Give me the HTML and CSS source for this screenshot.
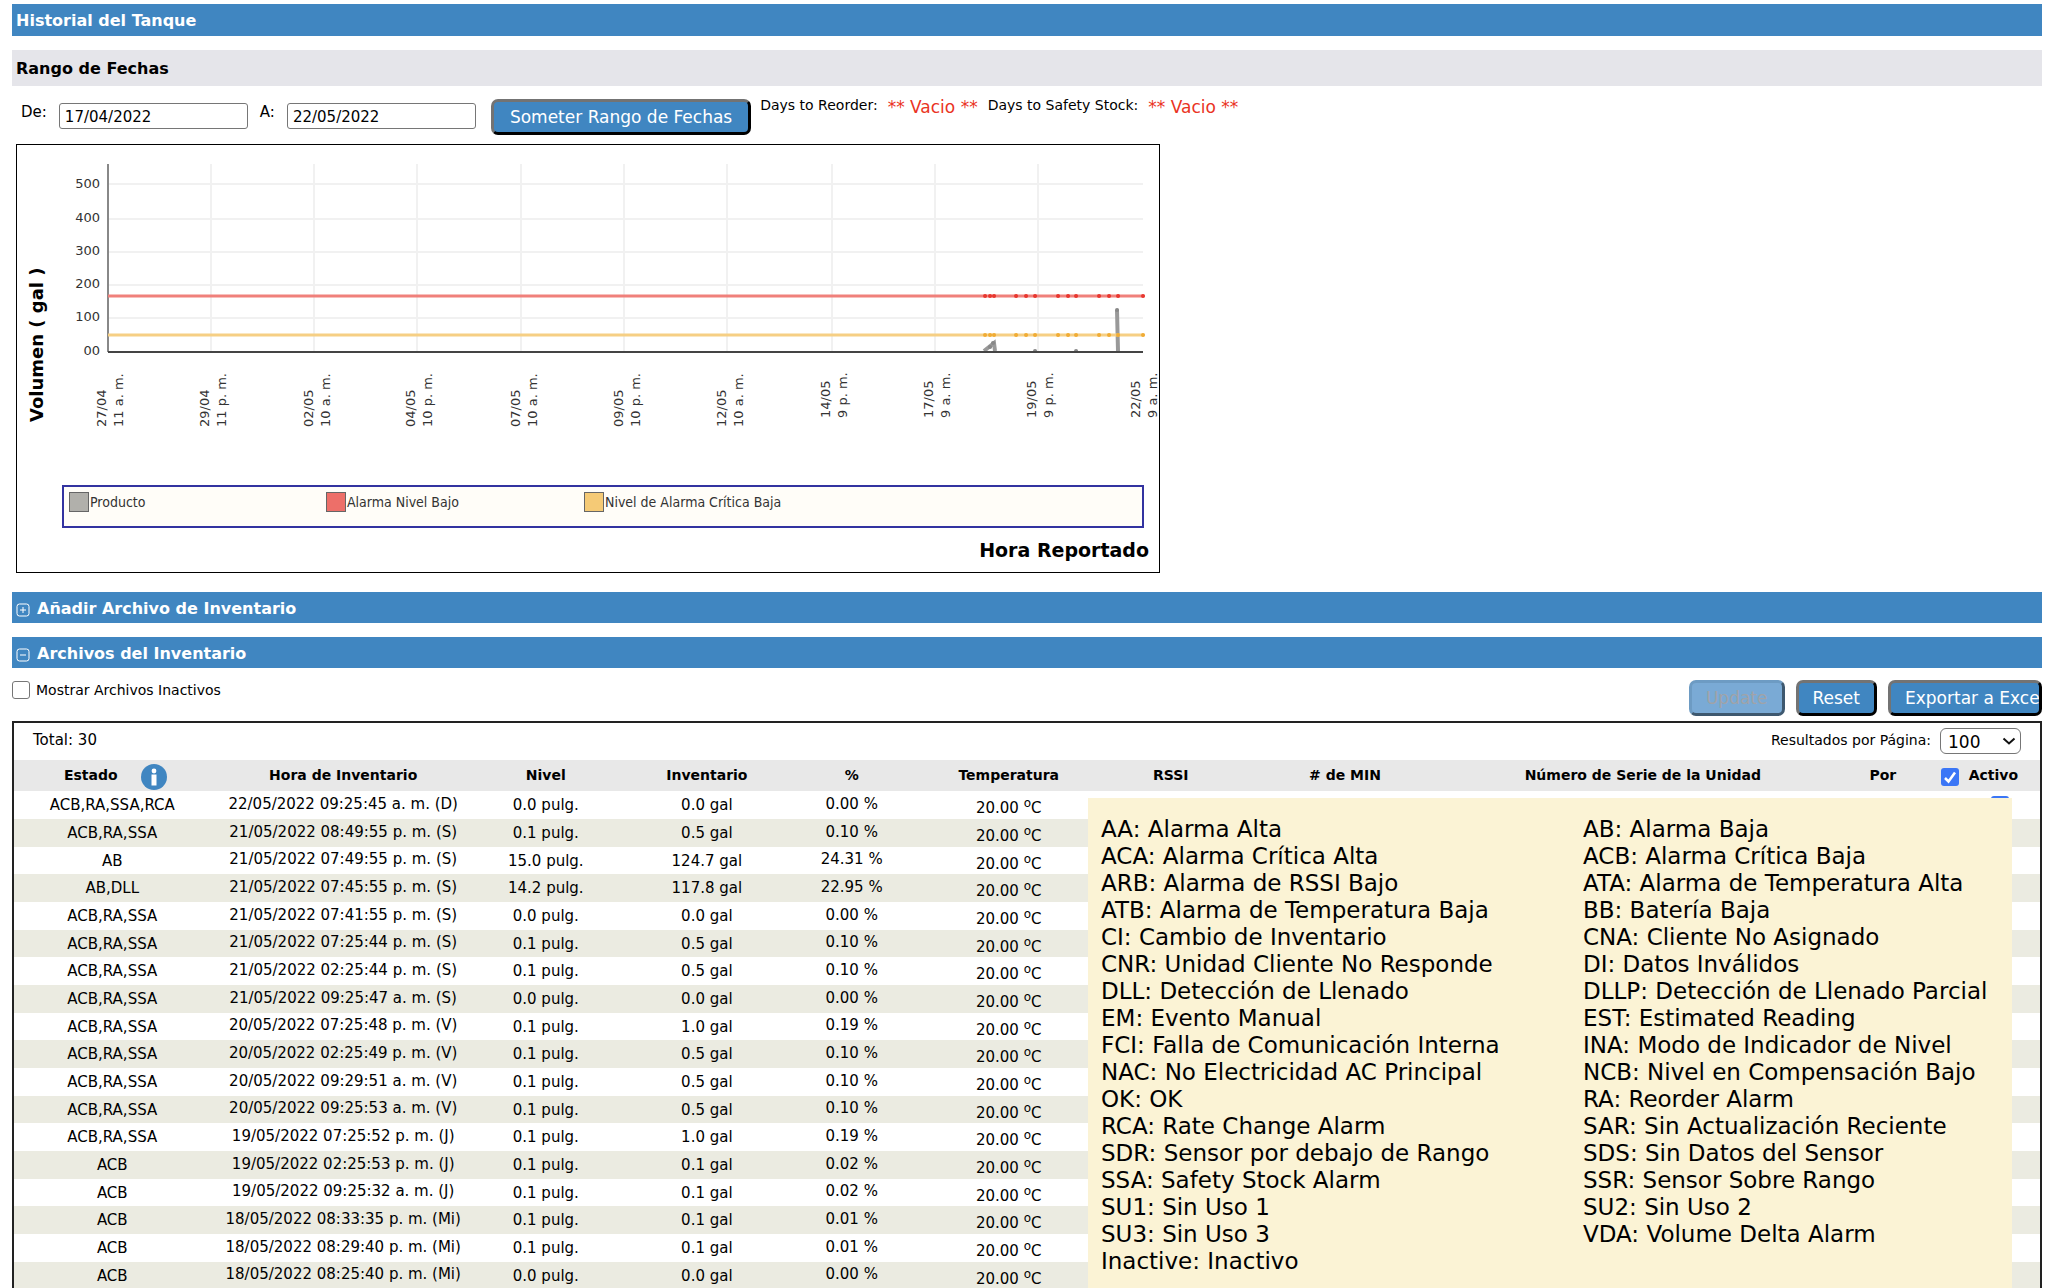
FILE: index.html
```html
<!DOCTYPE html>
<html lang="es">
<head>
<meta charset="utf-8">
<title>Historial del Tanque</title>
<link rel="stylesheet" href="styles.css">
</head>
<body>
<main class="page">
  <h1 class="bar">Historial del Tanque</h1>
  <h2 class="subbar">Rango de Fechas</h2>

  <form class="range">
    <label class="range-label" for="from">De:</label>
    <input class="date" id="from" type="text" value="17/04/2022">
    <label class="range-label" for="to">A:</label>
    <input class="date" id="to" type="text" value="22/05/2022">
    <button class="btn btn-submit" type="button">Someter Rango de Fechas</button>
    <p class="days"><span>Days to Reorder:</span><span class="empty">** Vacio **</span><span>Days to Safety Stock:</span><span class="empty">** Vacio **</span></p>
  </form>

  <figure class="chart">
    <svg class="chart-svg" viewBox="16 144 1144 429" role="img" aria-label="Volumen por hora reportado">
      <g class="grid">
        <path d="M109 184H1143M109 219H1143M109 252H1143M109 285H1143M109 318H1143"/>
        <path d="M211 164V351M314 164V351M417 164V351M521 164V351M624 164V351M727 164V351M832 164V351M935 164V351M1038 164V351"/>
      </g>
      <path class="axis-y" d="M108 164V352"/>
      <path class="product" d="M984 351L994 343L995 351M1117 310L1118 351"/>
      <path class="product-dots" d="M990 347h.1M993 343h.1M1035 351h.1M1076 351h.1M1117 310h.1"/>
      <path class="axis-x" d="M108 352H1143"/>
      <path class="low" d="M108 296H1143"/>
      <path class="critical" d="M108 335H1143"/>
      <path class="low-dots" d="M985 296h.1M990 296h.1M994 296h.1M1016 296h.1M1026 296h.1M1035 296h.1M1058 296h.1M1068 296h.1M1076 296h.1M1099 296h.1M1109 296h.1M1118 296h.1M1143 296h.1"/>
      <path class="critical-dots" d="M985 335h.1M990 335h.1M994 335h.1M1016 335h.1M1026 335h.1M1035 335h.1M1058 335h.1M1068 335h.1M1076 335h.1M1099 335h.1M1109 335h.1M1118 335h.1M1143 335h.1"/>
      <g class="tick" text-anchor="end">
        <text x="100" y="188">500</text><text x="100" y="222">400</text><text x="100" y="255">300</text><text x="100" y="288">200</text><text x="100" y="321">100</text><text x="100" y="355">00</text>
      </g>
      <g class="tick">
        <g transform="translate(106 427) rotate(-90)"><text>27/04</text><text y="17">11 a. m.</text></g>
        <g transform="translate(209 427) rotate(-90)"><text>29/04</text><text y="17">11 p. m.</text></g>
        <g transform="translate(313 427) rotate(-90)"><text>02/05</text><text y="17">10 a. m.</text></g>
        <g transform="translate(415 427) rotate(-90)"><text>04/05</text><text y="17">10 p. m.</text></g>
        <g transform="translate(520 427) rotate(-90)"><text>07/05</text><text y="17">10 a. m.</text></g>
        <g transform="translate(623 427) rotate(-90)"><text>09/05</text><text y="17">10 p. m.</text></g>
        <g transform="translate(726 427) rotate(-90)"><text>12/05</text><text y="17">10 a. m.</text></g>
        <g transform="translate(830 418) rotate(-90)"><text>14/05</text><text y="17">9 p. m.</text></g>
        <g transform="translate(933 418) rotate(-90)"><text>17/05</text><text y="17">9 a. m.</text></g>
        <g transform="translate(1036 418) rotate(-90)"><text>19/05</text><text y="17">9 p. m.</text></g>
        <g transform="translate(1140 418) rotate(-90)"><text>22/05</text><text y="17">9 a. m.</text></g>
      </g>
      <text class="axis-title" transform="translate(43 422) rotate(-90)">Volumen ( gal )</text>
      <rect class="legend-box" x="63" y="486" width="1080" height="41"/>
      <g class="swatch">
        <rect fill="#b1b0ab" x="69.500" y="492.500" width="19" height="19"/>
        <rect fill="#ed6f69" x="326.500" y="492.500" width="19" height="19"/>
        <rect fill="#f5ca76" x="584.500" y="492.500" width="19" height="19"/>
      </g>
      <g class="legend-text">
        <text x="90" y="507">Producto</text>
        <text x="347" y="507">Alarma Nivel Bajo</text>
        <text x="605" y="507">Nivel de Alarma Crítica Baja</text>
      </g>
      <text class="axis-title axis-title-x" x="1149" y="557" text-anchor="end">Hora Reportado</text>
    </svg>
  </figure>

  <h2 class="bar bar-toggle"><svg class="toggle" viewBox="0 0 14 14" aria-hidden="true"><rect x="1" y="1" width="12" height="12" rx="2.500"/><path d="M4 7H10M7 4V10"/></svg>Añadir Archivo de Inventario</h2>
  <h2 class="bar bar-toggle"><svg class="toggle" viewBox="0 0 14 14" aria-hidden="true"><rect x="1" y="1" width="12" height="12" rx="2.500"/><path d="M4 7H10"/></svg>Archivos del Inventario</h2>

  <div class="toolbar">
    <label class="inactive"><input class="check" type="checkbox">Mostrar Archivos Inactivos</label>
    <div class="actions">
      <button class="btn" type="button" disabled>Update</button>
      <button class="btn" type="button">Reset</button>
      <button class="btn btn-export" type="button">Exportar a Excel</button>
    </div>
  </div>

  <section class="records">
    <div class="summary">
      <span class="total">Total: 30</span>
      <div class="pager">
        <label for="size">Resultados por Página:</label>
        <span class="select-wrap"><select class="size" id="size"><option>100</option></select><svg class="chevron" viewBox="0 0 14 8" aria-hidden="true"><path d="M1.500 1.500L7 6.500L12.500 1.500"/></svg></span>
      </div>
    </div>
    <table class="table">
      <colgroup><col class="c-state"><col class="c-time"><col class="c-level"><col class="c-inv"><col class="c-pct"><col class="c-temp"><col class="c-rssi"><col class="c-min"><col class="c-serial"><col class="c-by"><col></colgroup>
      <thead>
        <tr><th><span class="state-head">Estado<svg class="info" viewBox="0 0 26 26" aria-hidden="true"><circle cx="13" cy="13" r="13" fill="#4086c1"/><circle cx="13" cy="7" r="2.400" fill="#fff"/><path d="M10.500 10.500h5v11h-5z" fill="#fff"/></svg></span></th><th>Hora de Inventario</th><th>Nivel</th><th>Inventario</th><th>%</th><th>Temperatura</th><th>RSSI</th><th># de MIN</th><th>Número de Serie de la Unidad</th><th>Por</th><th><label class="active-head"><input class="check" type="checkbox" checked>Activo</label></th></tr>
      </thead>
      <tbody id="rows"></tbody>
    </table>
    <aside class="legend" role="tooltip">
      <ul class="codes"><li>AA: Alarma Alta</li><li>AB: Alarma Baja</li><li>ACA: Alarma Crítica Alta</li><li>ACB: Alarma Crítica Baja</li><li>ARB: Alarma de RSSI Bajo</li><li>ATA: Alarma de Temperatura Alta</li><li>ATB: Alarma de Temperatura Baja</li><li>BB: Batería Baja</li><li>CI: Cambio de Inventario</li><li>CNA: Cliente No Asignado</li><li>CNR: Unidad Cliente No Responde</li><li>DI: Datos Inválidos</li><li>DLL: Detección de Llenado</li><li>DLLP: Detección de Llenado Parcial</li><li>EM: Evento Manual</li><li>EST: Estimated Reading</li><li>FCI: Falla de Comunicación Interna</li><li>INA: Modo de Indicador de Nivel</li><li>NAC: No Electricidad AC Principal</li><li>NCB: Nivel en Compensación Bajo</li><li>OK: OK</li><li>RA: Reorder Alarm</li><li>RCA: Rate Change Alarm</li><li>SAR: Sin Actualización Reciente</li><li>SDR: Sensor por debajo de Rango</li><li>SDS: Sin Datos del Sensor</li><li>SSA: Safety Stock Alarm</li><li>SSR: Sensor Sobre Rango</li><li>SU1: Sin Uso 1</li><li>SU2: Sin Uso 2</li><li>SU3: Sin Uso 3</li><li>VDA: Volume Delta Alarm</li><li>Inactive: Inactivo</li></ul>
    </aside>
  </section>
</main>
<script src="rows.js"></script>
</body>
</html>
```
FILE: styles.css
```css
* { box-sizing: border-box; }

body {
  margin: 0;
  background: #fff;
  color: #000;
  font: 15px/18px "DejaVu Sans", Verdana, sans-serif;
}

.page {
  height: 100vh;
  overflow: hidden;
  padding: 4px 6px 0 12px;
}

.bar, .subbar {
  margin: 0 0 14px;
  padding: 1px 4px 0;
  font-size: 16px;
  font-weight: bold;
}

.bar {
  height: 32px;
  line-height: 31px;
  background: #4086c1;
  color: #fff;
}

.subbar {
  height: 36px;
  margin-bottom: 13px;
  line-height: 35px;
  background: #e5e5ea;
}

.bar-toggle {
  display: flex;
  align-items: center;
  gap: 7px;
  height: 31px;
}

.toggle {
  width: 14px;
  height: 14px;
  margin-top: 3px;
  fill: none;
  stroke: #fff;
}

.range {
  display: flex;
  align-items: flex-start;
  height: 45px;
  padding-left: 9px;
}

.range-label { padding-top: 4px; }

.date {
  width: 189px;
  height: 26px;
  margin: 4px 12px 0;
  padding: 3px 5px 1px;
  border: 1px solid #767676;
  border-radius: 3px;
  background: #fff;
  color: #000;
  font: inherit;
}

.btn {
  height: 36px;
  padding: 0 14px;
  border: 3px outset #4a4a4a;
  border-color: #737373 #1c1c1c #1c1c1c #737373;
  border-radius: 7px;
  background: #4086c1;
  color: #fff;
  font: 17px/28px "DejaVu Sans", Verdana, sans-serif;
  white-space: nowrap;
}

.btn-submit {
  margin-left: 3px;
  padding: 0 16px;
}

.btn:disabled {
  border-color: #6d9bc3;
  background: #7aaad5;
  color: #a0a3a8;
}

.days {
  display: flex;
  gap: 10px;
  margin: -3px 0 0 9px;
  font-size: 14px;
}

.empty {
  padding-top: 2px;
  color: #ea3323;
  font-size: 17px;
}

.chart {
  max-width: 1144px;
  margin: 0 0 19px 4px;
  outline: 1px solid #000;
  outline-offset: -1px;
}

.chart-svg { display: block; width: 100%; }

.grid { fill: none; stroke: #f1f1f1; stroke-width: 2; }
.axis-y { stroke: #888; stroke-width: 2; }
.axis-x { stroke: #444; stroke-width: 2; }
.low { stroke: #f0807b; stroke-width: 3; }
.critical { stroke: #f6cf84; stroke-width: 3; }
.product { fill: none; stroke: #999; stroke-width: 4; }
.product-dots, .low-dots, .critical-dots { stroke-width: 4; stroke-linecap: round; }
.product-dots { stroke: #888; }
.low-dots { stroke: #e8372f; }
.critical-dots { stroke: #f0ac35; }
.tick { font-size: 13px; fill: #333; }
.axis-title { font-size: 18px; font-weight: bold; }
.axis-title-x { font-size: 19px; }
.legend-box { fill: #fffdf8; stroke: #3333a0; stroke-width: 2; }
.swatch { stroke: #666; }
.legend-text { font: 14px "DejaVu Sans Condensed", "DejaVu Sans", sans-serif; fill: #333; }

.toolbar {
  display: flex;
  justify-content: space-between;
  align-items: flex-start;
  height: 41px;
  margin-top: -2px;
}

.inactive {
  display: flex;
  align-items: center;
  gap: 6px;
  font-size: 14px;
}

.check {
  appearance: none;
  width: 18px;
  height: 18px;
  margin: 0;
  border: 1px solid #767676;
  border-radius: 3px;
  background: #fff;
}

.check:checked {
  border: 0;
  background: #3b76f6 url("data:image/svg+xml,%3Csvg xmlns='http://www.w3.org/2000/svg' viewBox='0 0 18 18'%3E%3Cpath d='M4 10L7.500 13.500L14 4.500' fill='none' stroke='white' stroke-width='2.500'/%3E%3C/svg%3E");
}

.inactive .check { margin-top: 1px; }

.actions { display: flex; gap: 11px; }

.btn-export {
  width: 154px;
  padding-right: 0;
  overflow: hidden;
  text-align: left;
}

.records {
  position: relative;
  min-height: 600px;
  border: 2px solid #222;
}

.summary {
  display: flex;
  justify-content: space-between;
  height: 37px;
  padding: 8px 19px 0;
}

.pager {
  display: flex;
  gap: 9px;
  font-size: 14px;
}

.select-wrap { position: relative; margin-top: -3px; }

.size {
  appearance: none;
  display: block;
  width: 81px;
  height: 26px;
  padding: 2px 7px 0;
  border: 1px solid #767676;
  border-radius: 6px;
  background: #fff;
  color: #000;
  font: 17px "DejaVu Sans", Verdana, sans-serif;
}

.chevron {
  position: absolute;
  top: 9px;
  right: 5px;
  width: 14px;
  height: 8px;
  fill: none;
  stroke: #111;
  stroke-width: 2;
}

.table {
  width: 100%;
  border-collapse: collapse;
  table-layout: fixed;
  text-align: center;
  white-space: nowrap;
}

.c-state { width: 9.7%; }
.c-time { width: 13.1%; }
.c-level { width: 6.9%; }
.c-inv { width: 9%; }
.c-pct { width: 5.3%; }
.c-temp { width: 10.2%; }
.c-rssi { width: 5.8%; }
.c-min { width: 11.4%; }
.c-serial { width: 18%; }
.c-by { width: 5.7%; }

th {
  height: 31px;
  padding: 0 0 2px;
  background: #e8e8e8;
  font-size: 14px;
}

.state-head {
  display: flex;
  justify-content: center;
  align-items: center;
  gap: 23px;
  height: 29px;
  padding-left: 6px;
}

.info { width: 26px; height: 26px; margin-top: 4px; }

.active-head {
  display: flex;
  align-items: center;
  gap: 10px;
}

.active-head .check { margin-top: 4px; }

td { height: 28px; padding: 0; }
tr:nth-child(3n) td { height: 27px; }
tbody tr:nth-child(even) { background: #ebebe1; }
td.up { padding-bottom: 3px; }
td.unit { padding-bottom: 5px; font-size: 14px; }
td.temp { padding-top: 6px; }
td .check { display: block; margin: 0 0 0 50px; }

sup {
  font-size: 12px;
  line-height: 0;
}

.legend {
  position: absolute;
  top: 75px;
  right: 28px;
  width: 924px;
  padding: 18px 13px;
  background: #fbf3d5;
  font-size: 23px;
  line-height: 27px;
}

.codes {
  display: grid;
  grid-template-columns: 482px 1fr;
  margin: 0;
  padding: 0;
  list-style: none;
}
```
FILE: rows.js
```js
const records = [
  ["ACB,RA,SSA,RCA", "22/05/2022 09:25:45 a. m. (D)", "0.0", "0.0", "0.00", "9", "000051041700030", "007310000", "45"],
  ["ACB,RA,SSA", "21/05/2022 08:49:55 p. m. (S)", "0.1", "0.5", "0.10"],
  ["AB", "21/05/2022 07:49:55 p. m. (S)", "15.0", "124.7", "24.31"],
  ["AB,DLL", "21/05/2022 07:45:55 p. m. (S)", "14.2", "117.8", "22.95"],
  ["ACB,RA,SSA", "21/05/2022 07:41:55 p. m. (S)", "0.0", "0.0", "0.00"],
  ["ACB,RA,SSA", "21/05/2022 07:25:44 p. m. (S)", "0.1", "0.5", "0.10"],
  ["ACB,RA,SSA", "21/05/2022 02:25:44 p. m. (S)", "0.1", "0.5", "0.10"],
  ["ACB,RA,SSA", "21/05/2022 09:25:47 a. m. (S)", "0.0", "0.0", "0.00"],
  ["ACB,RA,SSA", "20/05/2022 07:25:48 p. m. (V)", "0.1", "1.0", "0.19"],
  ["ACB,RA,SSA", "20/05/2022 02:25:49 p. m. (V)", "0.1", "0.5", "0.10"],
  ["ACB,RA,SSA", "20/05/2022 09:29:51 a. m. (V)", "0.1", "0.5", "0.10"],
  ["ACB,RA,SSA", "20/05/2022 09:25:53 a. m. (V)", "0.1", "0.5", "0.10"],
  ["ACB,RA,SSA", "19/05/2022 07:25:52 p. m. (J)", "0.1", "1.0", "0.19"],
  ["ACB", "19/05/2022 02:25:53 p. m. (J)", "0.1", "0.1", "0.02"],
  ["ACB", "19/05/2022 09:25:32 a. m. (J)", "0.1", "0.1", "0.02"],
  ["ACB", "18/05/2022 08:33:35 p. m. (Mi)", "0.1", "0.1", "0.01"],
  ["ACB", "18/05/2022 08:29:40 p. m. (Mi)", "0.1", "0.1", "0.01"],
  ["ACB", "18/05/2022 08:25:40 p. m. (Mi)", "0.0", "0.0", "0.00"]
];

document.getElementById("rows").innerHTML = records.map(([state, time, level, inventory, percent, rssi = "", min = "", serial = "", by = ""]) => `
  <tr><td>${state}</td><td class="up">${time}</td><td>${level} pulg.</td><td>${inventory} gal</td>
  <td class="up">${percent} %</td><td class="temp">20.00 <sup>o</sup>C</td>
  <td class="unit">${rssi}</td><td class="unit">${min}</td><td class="unit">${serial}</td><td class="unit">${by}</td>
  <td><input class="check" type="checkbox" aria-label="Activo" checked></td></tr>`).join("");
```
